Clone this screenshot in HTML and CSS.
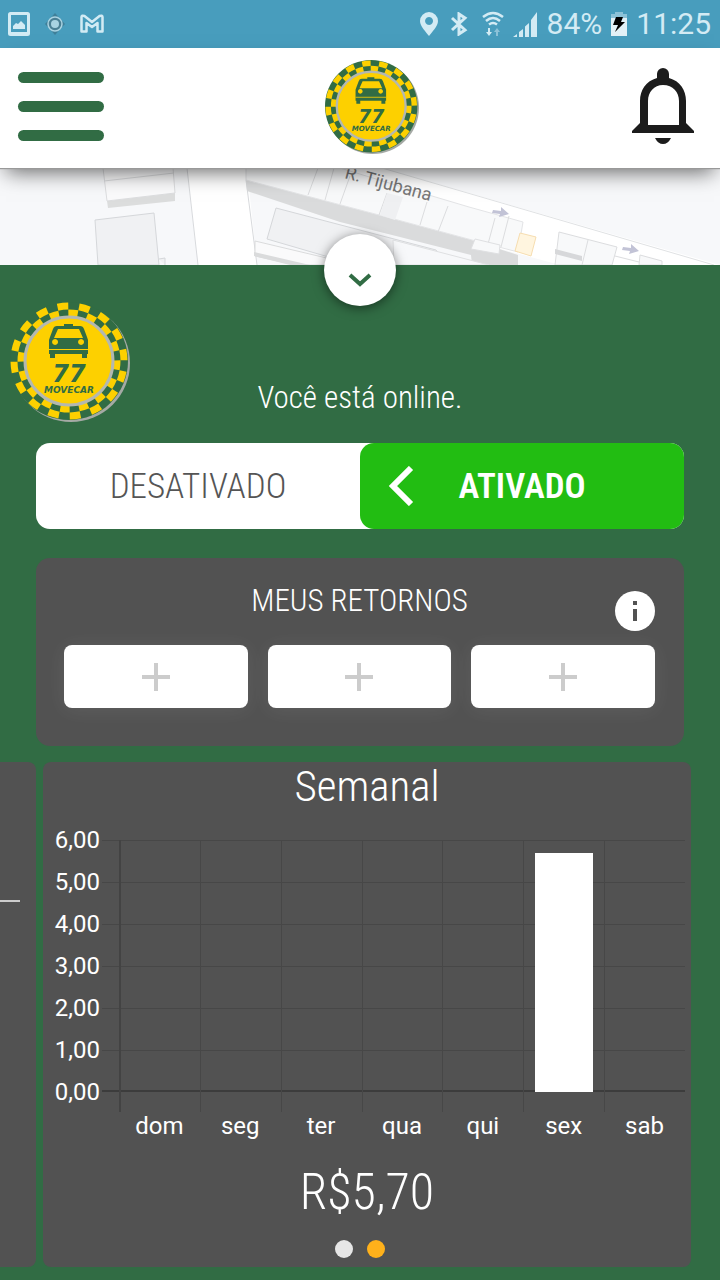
FILE: index.html
```html
<!DOCTYPE html>
<html lang="pt-BR">
<head>
    <meta charset="utf-8">
    <meta name="viewport" content="width=device-width, initial-scale=1">
    <title>77 Movecar</title>
    <link rel="stylesheet" href="styles.css">
</head>
<body>
    <svg class="defs" aria-hidden="true">
        <symbol id="logo" viewBox="0 0 120 120">
            <circle cx="61" cy="61" r="59" fill="#a5aaa5"/>
            <circle cx="59" cy="59" r="59" fill="#316c44"/>
            <g transform="rotate(-12 59 59)" fill="none" stroke="#fdd000">
                <circle cx="59" cy="59" r="55" stroke-width="7" pathLength="32" stroke-dasharray="1 1"/>
                <circle cx="59" cy="59" r="48" stroke-width="7" pathLength="32" stroke-dasharray="1 1" stroke-dashoffset="1"/>
            </g>
            <circle cx="59" cy="59" r="44" fill="#fdd000" stroke="#b4b8b0" stroke-width="3"/>
            <g fill="#316c44">
                <path d="M54 22h9v3h-9z"/>
                <path fill-rule="evenodd" d="M47 24h23q3 0 4 3l3 8 1 3v14h-1v4h-5v-4H45v4h-5v-4h-1V38l1-3 3-8q1-3 4-3zM48 27l-4 9h29l-4-9zM45 37a3 3 0 1 0 .1 0zM71 37a3 3 0 1 0 .1 0z"/>
                <path d="M39 47h39v1H39z" fill="#fdd000"/>
            </g>
            <text x="59" y="80" class="logo-number">77</text>
            <text x="59" y="91" class="logo-name">MOVECAR</text>
        </symbol>
    </svg>

    <div class="status-bar">
        <div class="status-left">
            <svg width="22" height="24" viewBox="0 0 22 24"><rect x="1.5" y="1.5" width="19" height="21" rx="1" fill="none" stroke="#d3ebf4" stroke-width="3"/><path d="M2 20h18v3H2zM5 17v-3l3-3 2 1 3-3 4 4v4z" fill="#d3ebf4"/></svg>
            <svg width="22" height="24" viewBox="0 0 22 24"><path d="M11 1l10 11-10 11L1 12z" fill="#3e7f99"/><circle cx="11" cy="12" r="7" fill="#4a7f94" stroke="#a9d3e2" stroke-width="1.500"/><circle cx="11" cy="12" r="4" fill="#a9d3e2"/></svg>
            <svg width="24" height="20" viewBox="0 0 24 20"><path d="M1.500 17.500V3q0-2 3-1L12 8l7.500-6q3-1 3 1v14.500h-5V9L12 13 6.500 9v8.500z" fill="none" stroke="#d3ebf4" stroke-width="2.500" stroke-linejoin="round"/></svg>
        </div>
        <div class="status-right">
            <svg width="18" height="24" viewBox="0 0 18 24"><path fill-rule="evenodd" d="M9 0a9 9 0 0 1 9 9c0 5-6 11-9 15C6 20 0 14 0 9a9 9 0 0 1 9-9zm0 5a4 4 0 1 0 .1 0z" fill="#d3ebf4"/></svg>
            <svg class="bluetooth" width="18" height="24" viewBox="0 0 18 24"><path d="M2 6l13 12-6 4V2l6 4L2 18" fill="none" stroke="#d3ebf4" stroke-width="3"/></svg>
            <svg class="wifi" width="22" height="26" viewBox="0 0 22 26"><path d="M1 6q10-8 20 0M4 10q7-6 14 0M7 13.500q4-3 8 0" fill="none" stroke="#d3ebf4" stroke-width="2.500"/><path d="M6 17h2v4h2l-3 4-3-4h2z" fill="#d3ebf4"/><path d="M14 25h2v-4h2l-3-4-3 4h2z" fill="#8cc2d8"/></svg>
            <svg width="25" height="25" viewBox="0 0 25 25"><path d="M0 25h4v-3zM6 25h4v-8l-4 3zM12 25h4V11l-4 3.500zM18 25h6V0l-6 8z" fill="#d3ebf4"/></svg>
            <span class="battery-text">84%</span>
            <svg width="16" height="24" viewBox="0 0 16 24"><path d="M4 0h8v2h4v22H0V2h4z" fill="#8cc2d8"/><path d="M0 6h16v18H0z" fill="#e2f1f7"/><path d="M5 5h7l-2 5h4L4 20l3-7H2z" fill="#000"/></svg>
            <span class="clock">11:25</span>
        </div>
    </div>

    <header class="header">
        <button type="button" class="menu-btn" aria-label="Menu"><i></i><i></i><i></i></button>
        <svg class="header-logo" role="img" aria-label="77 Movecar"><use href="#logo"/></svg>
        <button type="button" class="bell-btn" aria-label="Notificações">
            <svg width="64" height="78" viewBox="0 0 64 78"><path fill-rule="evenodd" fill="#1c1c1c" d="M26 6a6 6 0 0 1 12 0v4c11 3 17 12 17 23v22l8 8v2H1v-2l8-8V33C9 22 15 13 26 10zM32 17c-9 0-15 7-15 16v24h31V33c0-9-6-16-16-16z"/><path fill="#1c1c1c" d="M24 70h16q-3 6-8 6t-8-6z"/></svg>
        </button>
    </header>

    <main>
        <div class="map">
            <svg viewBox="0 0 720 97" preserveAspectRatio="xMidYMin slice" aria-hidden="true">
                <path d="M0 0h720v97H0z" fill="#f7f8fa"/>
                <path d="M187 0h60l10 97h-59z" fill="#fff"/>
                <path d="M187 0l11 97M246 12l11 85" fill="none" stroke="#d8dadd"/>
                <path d="M246 0h136l338 97H560L254 14z" fill="#fff"/>
                <path d="M382 0l332 97" fill="none" stroke="#e0e2e4"/>
                <path d="M107 33l68-8v8l-67 7z" fill="#dcdddd"/>
                <path d="M103 0l4 33 68-8-2-25zM104 13l70-8" fill="#fafafb" stroke="#dcdddf"/>
                <path d="M95 52l59-7 5 52H98zM159 91l6-1v7" fill="#f0f1f3" stroke="#d5d7da"/>
                <!-- block along the street, its shaded side first -->
                <path d="M246 12l133 35 93 25 46 15v10h-46l-1-10-75-19-56-14-93-31z" fill="#dadbdc"/>
                <path d="M246 0v12l133 35 93 25 46 12 5-30-54-15-47-14L340 0z" fill="#f8f9fa" stroke="#e3e4e6"/>
                <path d="M318 0l-10 27M334 0l-9 32M350 8l-10 28M387 25l-8 22M427 34l-7 23M448 38l-10 26M495 50l-7 26M509 48l-8 31" fill="none" stroke="#dcdddf"/>
                <path d="M387 25l16 4-8 23-15-5z" fill="#eff0f2"/>
                <path d="M276 40l160 42 12 15H356l-89-26z" fill="#f0f1f3" stroke="#d5d7da"/>
                <path d="M255 73l101 24h-60l-41-9z" fill="#fafafb" stroke="#dadbdc"/>
                <path d="M254 84l56 13h-20l-36-9z" fill="#dadbdc"/>
                <path d="M393 72l96 25h-95z" fill="#f7f8fa" stroke="#dfe0e2"/>
                <path d="M475 71l25 6-1 9-28-5z" fill="#f8f9fa" stroke="#dfe0e2"/>
                <path d="M520 65l16 4-5 19-16-5z" fill="#fff5df" stroke="#f6ddb0"/>
                <path d="M559 64l58 15-5 18h-57z" fill="#f8f9fa" stroke="#dcdddf"/>
                <path d="M555 81l27 7v5l-27-7z" fill="#d7d8da"/>
                <path d="M588 72l-6 25M615 88l24 6M640 87l22 6v4h-23z" fill="#f8f9fa" stroke="#dcdddf"/>
                <g fill="#c2c3d6">
                    <path id="arrow" d="M493 42l8 1v-4l8 7-10 3 1-3-8-1z"/>
                    <use href="#arrow" x="130" y="37"/>
                </g>
                <text class="street" transform="translate(344 10) rotate(15)">R. Tijubana</text>
            </svg>
            <button type="button" class="collapse-btn" aria-label="Recolher">
                <svg width="24" height="14" viewBox="0 0 24 14"><path d="M2 2l10 9L22 2" fill="none" stroke="#316c44" stroke-width="4"/></svg>
            </button>
        </div>

        <section class="driver">
            <svg class="driver-logo" role="img" aria-label="77 Movecar"><use href="#logo"/></svg>
            <p class="online">Você está online.</p>
        </section>

        <div class="toggle">
            <button type="button">DESATIVADO</button>
            <button type="button" class="active">
                <svg width="26" height="40" viewBox="0 0 26 40"><path d="M23 2L5 20l18 18" fill="none" stroke="#fff" stroke-width="6"/></svg>
                <span>ATIVADO</span>
            </button>
        </div>

        <section class="returns">
            <div class="returns-head">
                <h2>MEUS RETORNOS</h2>
                <button type="button" class="info-btn" aria-label="Informações">
                    <svg width="6" height="20" viewBox="0 0 6 20"><path d="M1 0h4v4H1zM1 8h4v12H1z" fill="#525252"/></svg>
                </button>
            </div>
            <div class="slots">
                <button type="button" aria-label="Adicionar retorno"><svg width="28" height="28" viewBox="0 0 28 28"><path d="M14 0v28M0 14h28" stroke="#ccc" stroke-width="4"/></svg></button>
                <button type="button" aria-label="Adicionar retorno"><svg width="28" height="28" viewBox="0 0 28 28"><path d="M14 0v28M0 14h28" stroke="#ccc" stroke-width="4"/></svg></button>
                <button type="button" aria-label="Adicionar retorno"><svg width="28" height="28" viewBox="0 0 28 28"><path d="M14 0v28M0 14h28" stroke="#ccc" stroke-width="4"/></svg></button>
            </div>
        </section>

        <div class="carousel">
            <div class="prev-card"><div class="prev-line"></div></div>
            <section class="card">
                <h2>Semanal</h2>
                <div class="chart">
                    <div class="y-axis">
                        <span>6,00</span><span>5,00</span><span>4,00</span><span>3,00</span><span>2,00</span><span>1,00</span><span>0,00</span>
                    </div>
                    <div class="lines"><i></i><i></i><i></i><i></i><i></i><i></i></div>
                    <div class="columns">
                        <div></div><div></div><div></div><div></div><div></div>
                        <div><div class="bar" style="height: 95%"></div></div>
                        <div></div>
                    </div>
                    <div class="days">
                        <span>dom</span><span>seg</span><span>ter</span><span>qua</span><span>qui</span><span>sex</span><span>sab</span>
                    </div>
                </div>
                <p class="total">R$5,70</p>
                <div class="dots">
                    <button type="button" aria-label="Página 1"></button>
                    <button type="button" class="current" aria-label="Página 2"></button>
                </div>
            </section>
        </div>
    </main>
</body>
</html>
```
FILE: styles.css
```css
* {
    box-sizing: border-box;
}
body {
    margin: 0;
    background-color: #316c44;
    color: #fff;
    font-family: "Roboto Condensed", "Liberation Sans Narrow", Roboto, sans-serif;
    font-weight: 300;
    overflow-x: hidden;
}
h2, p {
    margin: 0;
    font-weight: 300;
}
button {
    border: none;
    padding: 0;
    background: none;
    color: inherit;
    font-family: inherit;
    font-weight: inherit;
    cursor: pointer;
}
svg {
    display: block;
}
.defs {
    position: absolute;
    width: 0;
    height: 0;
}
.logo-number, .logo-name {
    font-family: "DejaVu Sans", sans-serif;
    font-weight: bold;
    font-style: italic;
    text-anchor: middle;
    fill: #316c44;
}
.logo-number {
    font-size: 24px;
}
.logo-name {
    font-size: 9px;
}

/* status bar */
.status-bar {
    display: flex;
    justify-content: space-between;
    align-items: center;
    height: 48px;
    padding: 0 9px 0 8px;
    background-color: #489dbd;
    color: #d3ebf4;
    font: 30px/48px Roboto, sans-serif;
}
.status-left, .status-right {
    display: flex;
    align-items: center;
}
.status-left {
    gap: 14px;
}
.status-right {
    gap: 9px;
}
.bluetooth {
    margin-left: 3px;
}
.wifi {
    margin-left: 5px;
}

/* header */
.header {
    position: relative;
    z-index: 1;
    display: grid;
    grid-template-columns: 1fr auto 1fr;
    align-items: center;
    height: 120px;
    padding: 0 25px 3px 18px;
    background-color: #fff;
    box-shadow: 0 1px 1px #999, 0 10px 20px -6px rgba(0, 0, 0, 0.6);
}
.menu-btn {
    display: flex;
    flex-direction: column;
    gap: 18px;
    width: 86px;
}
.menu-btn i {
    width: 86px;
    height: 11px;
    border-radius: 6px;
    background-color: #316c44;
}
.header-logo {
    width: 94px;
    height: 94px;
    margin-left: 30px;
}
.bell-btn {
    justify-self: end;
}

/* map */
.map {
    position: relative;
    height: 97px;
    background-color: #f7f8fa;
}
.map > svg {
    width: 100%;
    height: 97px;
}
.street {
    font: 18px Roboto, sans-serif;
    fill: #777;
}
.collapse-btn {
    position: absolute;
    left: calc(50% - 36px);
    bottom: -41px;
    display: flex;
    justify-content: center;
    align-items: center;
    width: 72px;
    height: 72px;
    padding-top: 20px;
    border-radius: 50%;
    background-color: #fff;
    box-shadow: 0 2px 12px rgba(0, 0, 0, 0.5);
}

/* driver */
.driver {
    display: grid;
    grid-template-columns: 1fr auto 1fr;
    align-items: end;
    padding: 37px 10px 0;
}
.driver-logo {
    width: 120px;
    height: 120px;
}
.online {
    padding-bottom: 4px;
    font-size: 31px;
    line-height: 40px;
}
.toggle {
    display: grid;
    grid-template-columns: 1fr 1fr;
    margin: 21px 36px 0;
    border-radius: 14px;
    background-color: #fff;
}
.toggle button {
    height: 86px;
    color: #555;
    font-size: 35px;
}
.toggle .active {
    display: grid;
    grid-template-columns: 1fr auto 1fr;
    align-items: center;
    padding: 0 28px;
    border-radius: 14px;
    background-color: #22bd12;
    color: #fff;
    font-weight: 600;
}

/* returns */
.returns {
    margin: 29px 36px 0;
    padding: 28px 29px 38px 28px;
    border-radius: 14px;
    background-color: #525252;
}
.returns-head {
    display: grid;
    grid-template-columns: 1fr auto 1fr;
    height: 45px;
    margin-bottom: 14px;
}
.returns-head h2 {
    grid-column: 2;
    font-size: 31px;
    line-height: 30px;
}
.info-btn {
    display: flex;
    justify-content: center;
    align-items: center;
    justify-self: end;
    align-self: end;
    width: 40px;
    height: 40px;
    border-radius: 50%;
    background-color: #fff;
}
.slots {
    display: grid;
    grid-template-columns: repeat(3, 1fr);
    gap: 20px;
}
.slots button {
    display: flex;
    justify-content: center;
    align-items: center;
    height: 63px;
    border-radius: 8px;
    background-color: #fff;
    box-shadow: 0 2px 20px rgba(255, 255, 255, 0.08);
}

/* carousel */
.carousel {
    display: flex;
    gap: 7px;
    margin: 16px 0 13px;
    padding-right: 29px;
}
.prev-card {
    flex: 0 0 36px;
    padding-top: 138px;
    border-radius: 0 8px 8px 0;
    background-color: #525252;
}
.prev-line {
    width: 20px;
    height: 2px;
    background-color: #ccc;
}
.card {
    flex: 1;
    padding: 0 6px 9px 0;
    border-radius: 8px;
    background-color: #525252;
    text-align: center;
}
.card h2 {
    padding-left: 6px;
    font-size: 43px;
    line-height: 48px;
}
.chart {
    display: grid;
    grid-template-columns: 59px 17px 1fr;
    grid-template-rows: 30px 252px 20px 28px;
    font: 24px/28px Roboto, sans-serif;
}
.y-axis {
    grid-area: 1 / 1 / 5 / 2;
    display: flex;
    flex-direction: column;
    padding: 9px 2px 0 0;
    text-align: right;
    line-height: 42px;
}
.lines {
    grid-area: 2 / 2 / 3 / 4;
    border-bottom: 2px solid #3c3c3c;
}
.lines i {
    display: block;
    height: 42px;
    border-top: 1px solid #474747;
}
.lines i:last-child {
    height: 40px;
}
.columns {
    grid-area: 2 / 3 / 4 / 4;
    display: grid;
    grid-template-columns: repeat(7, 1fr);
}
.columns > div {
    display: flex;
    justify-content: center;
    align-items: flex-end;
    padding-bottom: 20px;
    border-left: 1px solid #474747;
}
.columns > div:first-child {
    border-left: 2px solid #434343;
}
.bar {
    width: 72%;
    background-color: #fff;
}
.days {
    grid-area: 4 / 3 / 5 / 4;
    display: grid;
    grid-template-columns: repeat(7, 1fr);
}
.total {
    padding: 20px 0 16px 6px;
    font-size: 50px;
    line-height: 64px;
}
.dots {
    display: flex;
    justify-content: center;
    gap: 14px;
    padding-right: 8px;
}
.dots button {
    width: 18px;
    height: 18px;
    border-radius: 50%;
    background-color: #e6e6e6;
}
.dots .current {
    background-color: #ffb11b;
}
```
